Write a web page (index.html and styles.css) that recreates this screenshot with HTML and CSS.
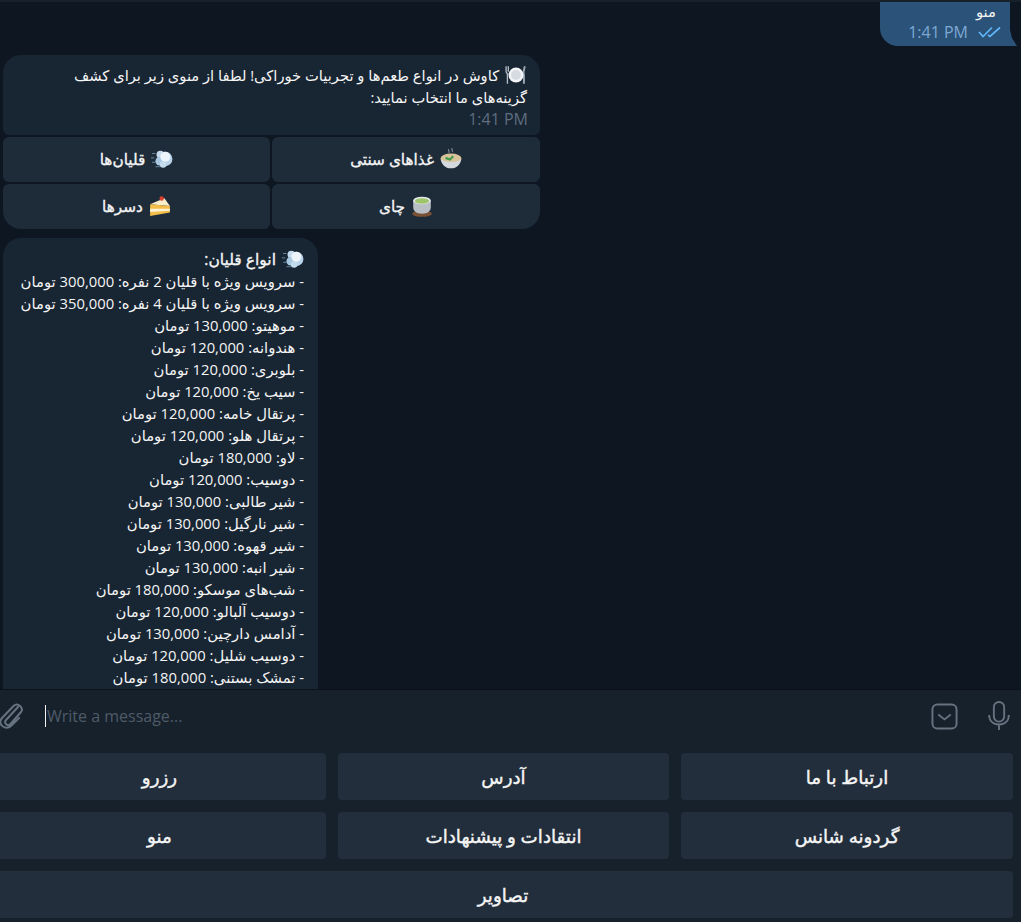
FILE: index.html
```html
<!DOCTYPE html>
<html lang="fa">
<head>
    <meta charset="UTF-8">
    <meta name="viewport" content="width=device-width, initial-scale=1.0">
    <title>Telegram chat</title>
    <link rel="stylesheet" href="styles.css">
</head>
<body>
    <div class="app">
        <div class="messages">
            <div class="bubble-out">
                <div class="out-text">منو</div>
                <div class="out-meta">
                    <span>1:41 PM</span>
                    <svg class="ticks" width="24" height="14" viewBox="0 0 24 14"><path d="M2 7l4 4.500L15 2.500M11 10l2 1.500L23 2.500" fill="none" stroke="#5eb5f7" stroke-width="1.700"/></svg>
                </div>
            </div>

            <div class="group">
                <div class="bubble-in intro">
                    <div class="line"><svg class="emoji" viewBox="0 0 20 20"><use href="#plate"/></svg> کاوش در انواع طعم‌ها و تجربیات خوراکی! لطفا از منوی زیر برای کشف گزینه‌های ما انتخاب نمایید:</div>
                    <div class="in-time">1:41 PM</div>
                </div>
                <div class="inline-kb">
                    <button class="inline-btn"><svg class="emoji" viewBox="0 0 20 20"><use href="#bowl"/></svg> غذاهای سنتی</button>
                    <button class="inline-btn"><svg class="emoji" viewBox="0 0 20 20"><use href="#dash"/></svg> قلیان‌ها</button>
                    <button class="inline-btn bl"><svg class="emoji" viewBox="0 0 20 20"><use href="#tea"/></svg> چای</button>
                    <button class="inline-btn br"><svg class="emoji" viewBox="0 0 20 20"><use href="#cake"/></svg> دسرها</button>
                </div>
            </div>

            <div class="bubble-in price-list">
                <div class="title"><svg class="emoji" viewBox="0 0 20 20"><use href="#dash"/></svg> انواع قلیان:</div>
                <div>- سرویس ویژه با قلیان 2 نفره: 300,000 تومان</div>
                <div>- سرویس ویژه با قلیان 4 نفره: 350,000 تومان</div>
                <div>- موهیتو: 130,000 تومان</div>
                <div>- هندوانه: 120,000 تومان</div>
                <div>- بلوبری: 120,000 تومان</div>
                <div>- سیب یخ: 120,000 تومان</div>
                <div>- پرتقال خامه: 120,000 تومان</div>
                <div>- پرتقال هلو: 120,000 تومان</div>
                <div>- لاو: 180,000 تومان</div>
                <div>- دوسیب: 120,000 تومان</div>
                <div>- شیر طالبی: 130,000 تومان</div>
                <div>- شیر نارگیل: 130,000 تومان</div>
                <div>- شیر قهوه: 130,000 تومان</div>
                <div>- شیر انبه: 130,000 تومان</div>
                <div>- شب‌های موسکو: 180,000 تومان</div>
                <div>- دوسیب آلبالو: 120,000 تومان</div>
                <div>- آدامس دارچین: 130,000 تومان</div>
                <div>- دوسیب شلیل: 120,000 تومان</div>
                <div>- تمشک بستنی: 180,000 تومان</div>
            </div>
        </div>

        <div class="panel">
            <div class="composer">
                <svg class="clip" width="28" height="30" viewBox="0 0 28 30"><path d="M21 7L9 20a3 3 0 0 0 4.500 4L24 12c3-4-3-10-7.500-6L5 18c-5 6 3 13 9 8l8-8" fill="none" stroke="#667280" stroke-width="2" stroke-linecap="round" transform="translate(-3 -1)"/></svg>
                <div class="input-box"><span class="caret"></span><span class="placeholder">Write a message...</span></div>
                <svg width="27" height="27" viewBox="0 0 28 28"><rect x="1.500" y="1.500" width="25" height="25" rx="5" fill="none" stroke="#667280" stroke-width="2"/><path d="M7.500 12l6.500 5 6.500-5" fill="none" stroke="#667280" stroke-width="2"/></svg>
                <svg class="mic" width="24" height="30" viewBox="0 0 24 32"><rect x="6.500" y="1" width="11" height="21" rx="5.500" fill="none" stroke="#667280" stroke-width="2"/><path d="M1.500 15c0 6 4 10 10.500 10s10.500-4 10.500-10M12 25v6" fill="none" stroke="#667280" stroke-width="2"/></svg>
            </div>
            <div class="keyboard">
                <button class="key">ارتباط با ما</button>
                <button class="key">آدرس</button>
                <button class="key">رزرو</button>
                <button class="key">گردونه شانس</button>
                <button class="key">انتقادات و پیشنهادات</button>
                <button class="key">منو</button>
                <button class="key wide">تصاویر</button>
            </div>
        </div>
    </div>

    <svg width="0" height="0" class="defs">
        <symbol id="plate" viewBox="0 0 20 20">
            <path d="M1 2v5c0 1 1 1.500 1.200 2v9M3 2v5" stroke="#b4bec8" stroke-width="1.200" fill="none"/>
            <path d="M18 2c-1 3-1.500 6-.800 9v7" stroke="#9aa6b2" stroke-width="1.800" fill="none"/>
            <circle cx="10" cy="10" r="6.800" fill="#f2f4f6"/>
            <circle cx="10" cy="10" r="4.500" fill="#d5dbe0"/>
        </symbol>
        <symbol id="bowl" viewBox="0 0 20 20">
            <path d="M8 1c-1 1 1 2 0 3.500M11 0c-1 1 1 2 0 3.500" stroke="#7f8b97" fill="none"/>
            <ellipse cx="10" cy="9.500" rx="9.500" ry="4.500" fill="#d9c39a"/>
            <path d="M5 9l4 1.500 3-3" stroke="#3f9a4a" stroke-width="2" fill="none"/>
            <path d="M.5 10c1 5 4 8.500 9.500 8.500s8.500-3.500 9.500-8.500c-3 3.500-16 3.500-19 0z" fill="#d3d9de"/>
        </symbol>
        <symbol id="dash" viewBox="0 0 20 20">
            <circle cx="13" cy="10" r="6.500" fill="#b9d4ea"/>
            <circle cx="8.500" cy="6" r="3.500" fill="#c4dbee"/>
            <circle cx="8" cy="12" r="4" fill="#a9c8e0"/>
            <circle cx="11" cy="15" r="3" fill="#c4dbee"/>
            <circle cx="13" cy="8" r="4.500" fill="#edf5fb"/>
            <path d="M1 5h3M0 9h3M1 13h3M4 17h4" stroke="#6f93b0" stroke-width=".8"/>
        </symbol>
        <symbol id="tea" viewBox="0 0 20 20">
            <ellipse cx="10" cy="17" rx="9" ry="2.800" fill="#7a5135"/>
            <path d="M2 5v6c0 4 3 6 8 6s8-2 8-6V5z" fill="#b9bfc4"/>
            <ellipse cx="10" cy="5" rx="8" ry="3.500" fill="#e3e7ea"/>
            <ellipse cx="10" cy="5.500" rx="6.500" ry="2.500" fill="#9fc56b"/>
        </symbol>
        <symbol id="cake" viewBox="0 0 20 20">
            <path d="M1 8.500L14 3l5 7z" fill="#fbeecb"/>
            <circle cx="11.500" cy="3.200" r="2" fill="#d8402f"/>
            <path d="M1 8.500L19 10v6L1 19z" fill="#f3bf4a"/>
            <path d="M1 12.500L19 12.500v1.800L1 15.500z" fill="#fff2d2"/>
        </symbol>
    </svg>
</body>
</html>
```

FILE: styles.css
```css
* {
    box-sizing: border-box;
}
html, body {
    margin: 0;
    height: 100%;
    overflow: hidden;
}
body {
    background: #0e1621;
    font-family: "Open Sans", "DejaVu Sans", sans-serif;
    font-size: 14.800px;
    color: #f5f5f5;
}
.defs {
    position: absolute;
}
.app {
    display: flex;
    flex-direction: column;
    height: 922px;
}
.messages {
    height: 689px;
    overflow: hidden;
    padding: 0 4px 0 3px;
    border-top: 2px solid #17212b;
}
.emoji {
    width: 22px;
    height: 22px;
    margin-left: 2px;
    vertical-align: -5px;
}

/* outgoing */
.bubble-out {
    width: 137px;
    height: 44px;
    margin-left: auto;
    padding: 0 21px 0 12px;
    background: #2b5278;
    border-radius: 0 0 0 18px;
    clip-path: polygon(0 0, 130px 0, 130px 28px, 132px 36px, 137px 44px, 0 44px);
    direction: rtl;
}
.out-text {
    line-height: 18px;
}
.out-meta {
    display: flex;
    direction: ltr;
    justify-content: flex-end;
    align-items: center;
    gap: 9px;
    margin: 2px -5px 0 0;
    color: #7da8d3;
    font-size: 16px;
    line-height: 20px;
}

/* incoming */
.bubble-in {
    background: #182533;
    direction: rtl;
    line-height: 22px;
}
.group {
    width: 537px;
    margin-top: 9px;
}
.intro {
    height: 80px;
    padding: 9px 13px 0 13px;
    border-radius: 18px 18px 6px 6px;
}
.line {
    font-size: 14.700px;
}
.in-time {
    direction: ltr;
    text-align: right;
    margin: 1px -1px 0 0;
    color: #5d6d7e;
    font-size: 16px;
    line-height: 20px;
}
.inline-kb {
    display: grid;
    grid-template-columns: 268px 267px;
    gap: 2px;
    direction: rtl;
    margin-top: 2px;
}
.inline-btn {
    height: 45px;
    padding-bottom: 3px;
    border: 0;
    border-radius: 6px;
    background: #1e2c3a;
    color: #f5f5f5;
    font-family: inherit;
    font-size: 15.300px;
    -webkit-text-stroke: .35px #f5f5f5;
}
.inline-btn.bl {
    border-bottom-right-radius: 18px;
}
.inline-btn.br {
    border-bottom-left-radius: 18px;
}
.price-list {
    width: 315px;
    margin-top: 9px;
    padding: 10px 14px 60px;
    border-radius: 18px;
    white-space: nowrap;
}
.title {
    height: 22px;
    font-size: 15.500px;
    -webkit-text-stroke: .35px #f5f5f5;
}

/* bottom panel */
.panel {
    flex: 1;
    background: #17212b;
    border-top: 1px solid #0b1119;
}
.composer {
    display: flex;
    align-items: center;
    height: 52px;
    padding: 0 10px 0 0;
    gap: 26px;
}
.clip {
    flex: none;
    margin-right: 2px;
}
.input-box {
    flex: 1;
    display: flex;
    align-items: center;
    margin-left: -11px;
}
.caret {
    width: 1px;
    height: 22px;
    background: #f5f5f5;
}
.placeholder {
    margin-left: 1px;
    color: #4e5b68;
    font-size: 16px;
}
.mic {
    margin-left: 3px;
}
.keyboard {
    display: grid;
    grid-template-columns: 332px 331px 1fr;
    gap: 12px;
    direction: rtl;
    width: 1020px;
    margin: 11px 0 0 -7px;
}
.key {
    height: 47px;
    border: 0;
    border-radius: 4px;
    background: #232e3c;
    color: #f5f5f5;
    font-family: inherit;
    font-size: 18.300px;
    -webkit-text-stroke: .4px #f5f5f5;
}
.key.wide {
    grid-column: 1 / -1;
}
```
